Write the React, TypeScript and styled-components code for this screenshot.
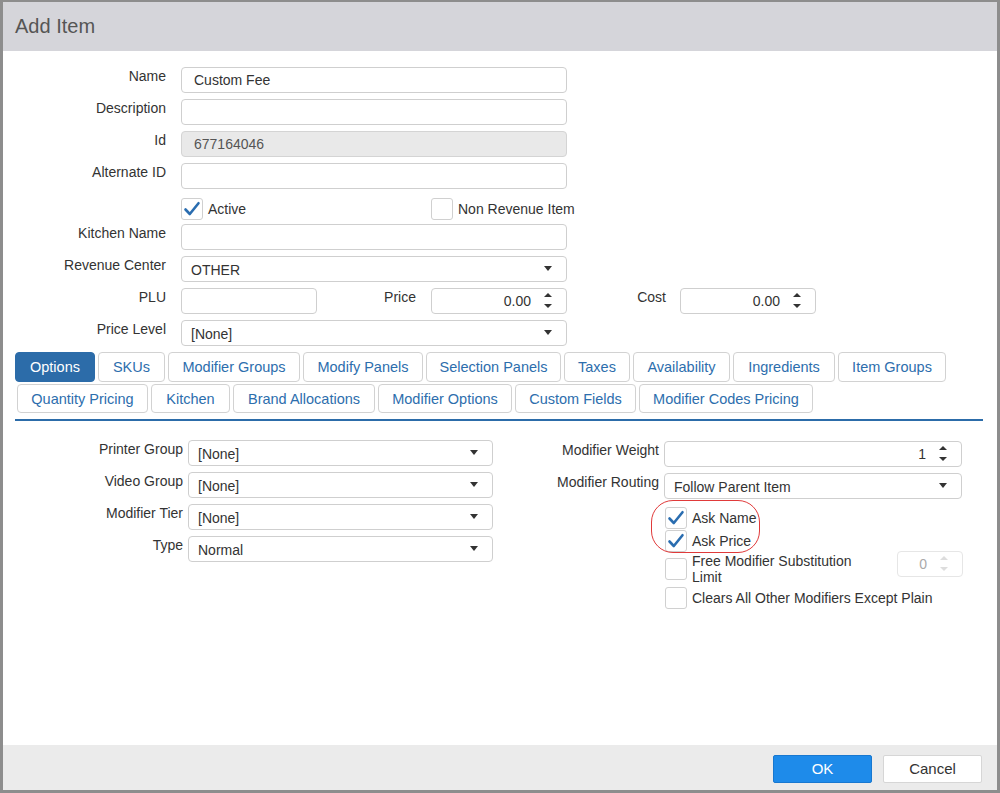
import styled, { createGlobalStyle } from 'styled-components';

const GlobalStyle = createGlobalStyle`
  html, body { margin: 0; padding: 0; background: #fff; }
  body {
    font-family: 'Liberation Sans', Arial, sans-serif;
    font-size: 14px;
    color: #333;
    overflow: hidden;
  }
  * { box-sizing: border-box; }
`;

const Dialog = styled.div`
  width: 1000px;
  height: 793px;
  border: solid #8d8d8d;
  border-width: 2px 3px 3px 3px;
  display: flex;
  flex-direction: column;
  background: #fff;
`;

const Header = styled.div`
  height: 49px;
  flex-shrink: 0;
  background: #d5d5da;
  padding: 0 12px;
  display: flex;
  align-items: center;
  font-size: 20px;
  color: #555;
`;

const Body = styled.div`
  flex: 1;
  padding-top: 16px;
  display: flex;
  flex-direction: column;
`;

const Form = styled.div`
  display: flex;
  flex-direction: column;
  gap: 6px;
`;

const Row = styled.div`
  display: flex;
  align-items: flex-start;
`;

const Label = styled.div<{ $w: number; $gap?: number }>`
  width: ${(p) => p.$w}px;
  margin-right: ${(p) => p.$gap ?? 15}px;
  flex-shrink: 0;
  text-align: right;
  line-height: 18px;
  white-space: nowrap;
`;

const Field = styled.div<{ $w: number; $disabled?: boolean }>`
  width: ${(p) => p.$w}px;
  height: 26px;
  flex-shrink: 0;
  border: 1px solid ${(p) => (p.$disabled ? '#d4d4d4' : '#cfcfcf')};
  border-radius: 4px;
  background: ${(p) => (p.$disabled ? '#e9e9e9' : '#fff')};
  color: ${(p) => (p.$disabled ? '#555' : '#333')};
  padding: 0 12px;
  display: flex;
  align-items: center;
  white-space: nowrap;
`;

const SelectBox = styled(Field)`
  padding: 1px 14px 0 9px;
  justify-content: space-between;
`;

const Caret = styled.span`
  width: 0;
  height: 0;
  border-left: 4px solid transparent;
  border-right: 4px solid transparent;
  border-top: 5px solid #333;
  margin-top: -2px;
`;

const SpinBox = styled(Field)<{ $faded?: boolean }>`
  justify-content: flex-end;
  padding: 0 14px 0 10px;
  gap: 13px;
  color: ${(p) => (p.$faded ? '#aaa' : '#333')};
  border-color: ${(p) => (p.$faded ? '#e6e6e6' : '#cfcfcf')};
  background: #fff;
`;

const Spinner = styled.span<{ $faded?: boolean }>`
  display: flex;
  flex-direction: column;
  gap: 7px;
  margin-top: -1px;
  &::before, &::after {
    content: '';
    width: 0;
    height: 0;
    border-left: 4px solid transparent;
    border-right: 4px solid transparent;
  }
  &::before { border-bottom: 4px solid ${(p) => (p.$faded ? '#ddd' : '#333')}; }
  &::after { border-top: 4px solid ${(p) => (p.$faded ? '#ddd' : '#333')}; }
`;

const CheckRowTop = styled.div`
  display: flex;
  height: 23px;
  padding-left: 178px;
  margin-top: 2px;
  margin-bottom: -2px;
`;

const CheckItem = styled.div<{ $w?: number }>`
  display: flex;
  align-items: center;
  gap: 5px;
  width: ${(p) => (p.$w ? `${p.$w}px` : 'auto')};
  min-height: 23px;
`;

const Box = styled.span`
  width: 22px;
  height: 22px;
  flex-shrink: 0;
  border: 1px solid #d0d0d0;
  border-radius: 3px;
  background: #fff;
  display: flex;
  align-items: center;
  justify-content: center;
`;

const Tabs = styled.div`
  margin-top: 6px;
  padding: 0 14px 0 12px;
  display: flex;
  flex-direction: column;
  gap: 2px;
`;

const TabRow = styled.div<{ $indent?: number }>`
  display: flex;
  gap: 3px;
  padding-left: ${(p) => p.$indent ?? 0}px;
`;

const Tab = styled.div<{ $w: number; $active?: boolean; $h: number }>`
  width: ${(p) => p.$w}px;
  height: ${(p) => p.$h}px;
  border: 1px solid ${(p) => (p.$active ? '#2c6ca9' : '#d2d2d2')};
  border-radius: 4px;
  background: ${(p) => (p.$active ? '#2c6ca9' : '#fff')};
  color: ${(p) => (p.$active ? '#fff' : '#2d6ead')};
  display: flex;
  align-items: center;
  justify-content: center;
  white-space: nowrap;
  font-size: 14.5px;
`;

const TabLine = styled.div`
  height: 2px;
  background: #2c6ca9;
  margin-top: 4px;
`;

const Panel = styled.div`
  margin-top: 19px;
  padding-left: 12px;
  display: grid;
  grid-template-columns: 485px 463px;
`;

const Column = styled.div`
  display: flex;
  flex-direction: column;
  gap: 6px;
`;

const RightColumn = styled(Column)`
  padding-top: 1px;
`;

const CheckList = styled.div`
  position: relative;
  margin-top: 1px;
  margin-left: 165px;
  display: flex;
  flex-direction: column;
`;

const WrapText = styled.span`
  width: 180px;
  line-height: 16px;
`;

const FreeRow = styled(CheckItem)`
  height: 34px;
  align-items: center;
`;

const RightSpin = styled.div`
  margin-left: auto;
  align-self: flex-start;
  margin-top: -1px;
`;

const Annotation = styled.div`
  position: absolute;
  left: -14px;
  top: -6px;
  width: 109px;
  height: 53px;
  border: 1px solid #e03a3a;
  border-radius: 22px;
  pointer-events: none;
`;

const Footer = styled.div`
  height: 45px;
  flex-shrink: 0;
  background: #ebebeb;
  display: flex;
  align-items: center;
  justify-content: flex-end;
  gap: 11px;
  padding: 2px 15px 0 0;
`;

const Button = styled.button<{ $primary?: boolean }>`
  width: 99px;
  height: 28px;
  border-radius: 2px;
  border: 1px solid ${(p) => (p.$primary ? '#1878d0' : '#d6d6d6')};
  background: ${(p) => (p.$primary ? '#1e8bea' : '#fff')};
  color: ${(p) => (p.$primary ? '#fff' : '#333')};
  font-family: 'Liberation Sans', Arial, sans-serif;
  font-size: 15px;
  padding: 0;
`;

function Check({ checked }: { checked?: boolean }) {
  return (
    <Box>
      {checked && (
        <svg width="20" height="20" viewBox="0 0 20 20">
          <path
            d="M3.5 10.5 L7.8 15 L16.5 4.2"
            fill="none"
            stroke="#2a6db0"
            strokeWidth="2.6"
            strokeLinecap="round"
            strokeLinejoin="round"
          />
        </svg>
      )}
    </Box>
  );
}

function Select({ w, value }: { w: number; value: string }) {
  return (
    <SelectBox $w={w}>
      <span>{value}</span>
      <Caret />
    </SelectBox>
  );
}

function Spin({ w, value, faded }: { w: number; value: string; faded?: boolean }) {
  return (
    <SpinBox $w={w} $faded={faded}>
      <span>{value}</span>
      <Spinner $faded={faded} />
    </SpinBox>
  );
}

const tabsTop = [
  { t: 'Options', w: 80, active: true },
  { t: 'SKUs', w: 67 },
  { t: 'Modifier Groups', w: 132 },
  { t: 'Modify Panels', w: 120 },
  { t: 'Selection Panels', w: 135 },
  { t: 'Taxes', w: 66 },
  { t: 'Availability', w: 97 },
  { t: 'Ingredients', w: 102 },
  { t: 'Item Groups', w: 108 },
];

const tabsBottom = [
  { t: 'Quantity Pricing', w: 131 },
  { t: 'Kitchen', w: 79 },
  { t: 'Brand Allocations', w: 142 },
  { t: 'Modifier Options', w: 134 },
  { t: 'Custom Fields', w: 121 },
  { t: 'Modifier Codes Pricing', w: 174 },
];

export default function App() {
  return (
    <>
      <GlobalStyle />
      <Dialog>
        <Header>Add Item</Header>
        <Body>
          <Form>
            <Row>
              <Label $w={163}>Name</Label>
              <Field $w={386}>Custom Fee</Field>
            </Row>
            <Row>
              <Label $w={163}>Description</Label>
              <Field $w={386} />
            </Row>
            <Row>
              <Label $w={163}>Id</Label>
              <Field $w={386} $disabled>677164046</Field>
            </Row>
            <Row>
              <Label $w={163}>Alternate ID</Label>
              <Field $w={386} />
            </Row>
            <CheckRowTop>
              <CheckItem $w={250}>
                <Check checked />
                <span>Active</span>
              </CheckItem>
              <CheckItem>
                <Check />
                <span>Non Revenue Item</span>
              </CheckItem>
            </CheckRowTop>
            <Row>
              <Label $w={163}>Kitchen Name</Label>
              <Field $w={386} />
            </Row>
            <Row>
              <Label $w={163}>Revenue Center</Label>
              <Select w={386} value="OTHER" />
            </Row>
            <Row>
              <Label $w={163}>PLU</Label>
              <Field $w={136} />
              <Label $w={99}>Price</Label>
              <Spin w={136} value="0.00" />
              <Label $w={99} $gap={14}>Cost</Label>
              <Spin w={136} value="0.00" />
            </Row>
            <Row>
              <Label $w={163}>Price Level</Label>
              <Select w={386} value="[None]" />
            </Row>
          </Form>

          <Tabs>
            <TabRow>
              {tabsTop.map((tab) => (
                <Tab key={tab.t} $w={tab.w} $h={30} $active={tab.active}>
                  {tab.t}
                </Tab>
              ))}
            </TabRow>
            <TabRow $indent={2}>
              {tabsBottom.map((tab) => (
                <Tab key={tab.t} $w={tab.w} $h={29}>
                  {tab.t}
                </Tab>
              ))}
            </TabRow>
            <TabLine />
          </Tabs>

          <Panel>
            <Column>
              <Row>
                <Label $w={168} $gap={5}>Printer Group</Label>
                <Select w={305} value="[None]" />
              </Row>
              <Row>
                <Label $w={168} $gap={5}>Video Group</Label>
                <Select w={305} value="[None]" />
              </Row>
              <Row>
                <Label $w={168} $gap={5}>Modifier Tier</Label>
                <Select w={305} value="[None]" />
              </Row>
              <Row>
                <Label $w={168} $gap={5}>Type</Label>
                <Select w={305} value="Normal" />
              </Row>
            </Column>
            <RightColumn>
              <Row>
                <Label $w={159} $gap={5}>Modifier Weight</Label>
                <Spin w={298} value="1" />
              </Row>
              <Row>
                <Label $w={159} $gap={5}>Modifier Routing</Label>
                <Select w={298} value="Follow Parent Item" />
              </Row>
              <CheckList>
                <Annotation />
                <CheckItem>
                  <Check checked />
                  <span>Ask Name</span>
                </CheckItem>
                <CheckItem>
                  <Check checked />
                  <span>Ask Price</span>
                </CheckItem>
                <FreeRow>
                  <Check />
                  <WrapText>Free Modifier Substitution Limit</WrapText>
                  <RightSpin>
                    <Spin w={66} value="0" faded />
                  </RightSpin>
                </FreeRow>
                <CheckItem>
                  <Check />
                  <span>Clears All Other Modifiers Except Plain</span>
                </CheckItem>
              </CheckList>
            </RightColumn>
          </Panel>
        </Body>
        <Footer>
          <Button $primary>OK</Button>
          <Button>Cancel</Button>
        </Footer>
      </Dialog>
    </>
  );
}
